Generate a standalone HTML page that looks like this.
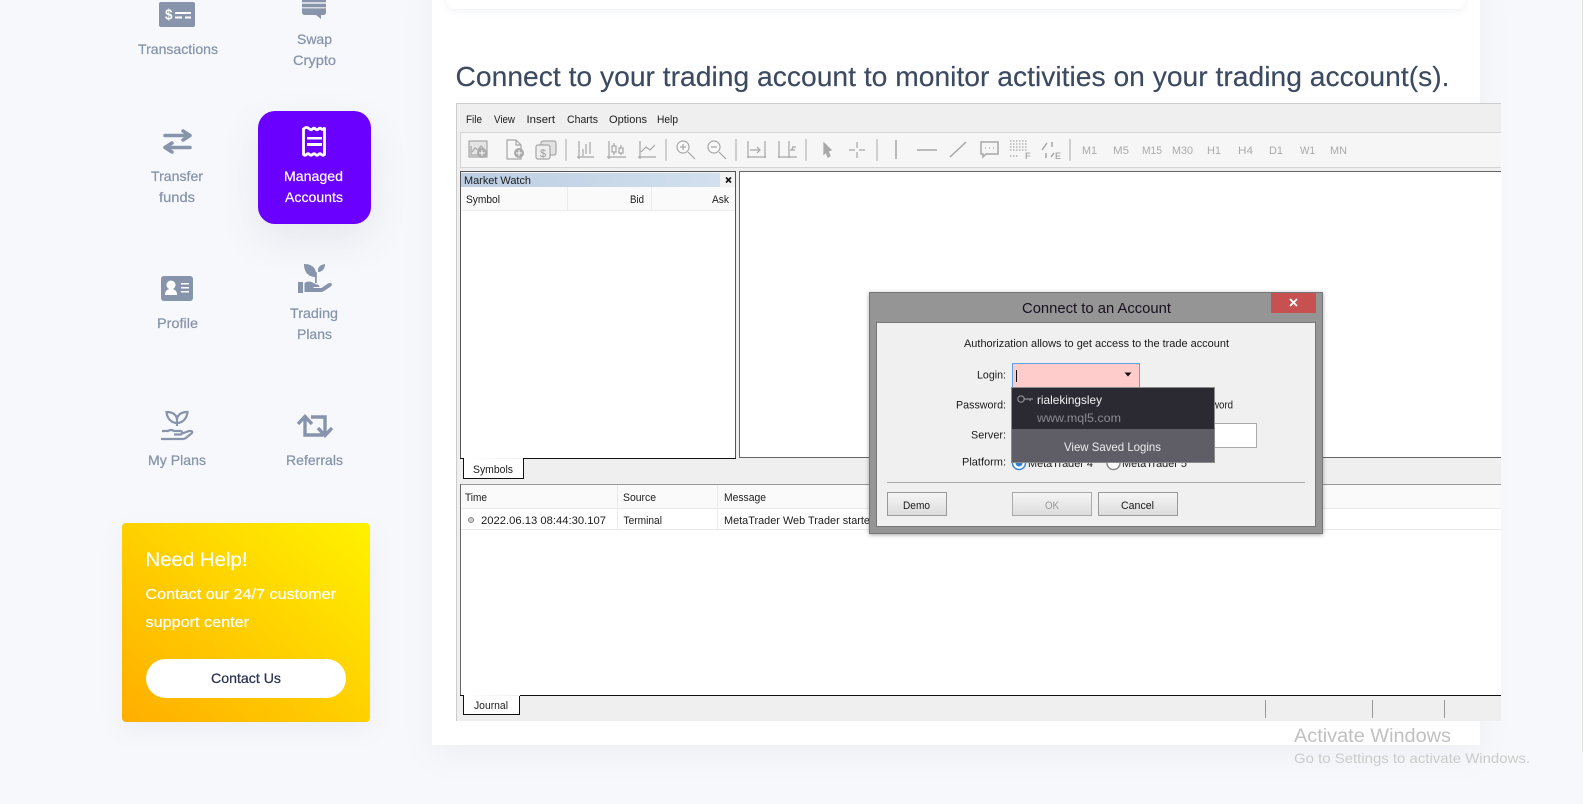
<!DOCTYPE html>
<html><head><meta charset="utf-8"><title>Managed Accounts</title>
<style>
html,body{margin:0;padding:0;width:1583px;height:804px;overflow:hidden;background:#f7f8fb;font-family:"Liberation Sans",sans-serif}
.a{position:absolute}
svg{position:absolute;left:0;top:0}
svg text{font-family:"Liberation Sans",sans-serif}
.n{fill:#8695ab;font-size:14px;stroke:#8695ab;stroke-width:.25px}
.w{fill:#fff;stroke:#fff;stroke-width:.2px}
.m{fill:#1c1c1c;font-size:11px}
.d{fill:#1a1a1a;font-size:11px}
.tf{fill:#aaa;font-size:11px}
.ic{fill:none;stroke:#a6a6a6;stroke-width:1.2}
.sep{stroke:#aaa;stroke-width:1}
</style></head><body>
<div class="a" style="left:432px;top:-20px;width:1048px;height:765px;background:#fff;box-shadow:0 10px 30px rgba(120,130,160,.07)"></div>
<div class="a" style="left:447px;top:-20px;width:1018px;height:29px;background:#fff;border-radius:8px;box-shadow:0 2px 8px rgba(120,130,160,.1)"></div>
<div class="a" style="left:258px;top:111px;width:113px;height:113px;background:#6a00ff;border-radius:17px;box-shadow:0 16px 40px rgba(90,90,130,.1)"></div>
<div class="a" style="left:122px;top:523px;width:248px;height:199px;background:linear-gradient(to top right,#ffae00,#fff200);border-radius:4px;box-shadow:0 8px 24px rgba(120,130,160,.08)"></div>
<div class="a" style="left:146px;top:659px;width:200px;height:39px;background:#fff;border-radius:20px"></div>

<svg width="1583" height="804" viewBox="0 0 1583 804" xmlns="http://www.w3.org/2000/svg">
<defs>
<linearGradient id="mw" x1="0" x2="1" y1="0" y2="0"><stop offset="0" stop-color="#bccee3"/><stop offset="1" stop-color="#d2e0ee"/></linearGradient>
<linearGradient id="btn" x1="0" x2="0" y1="0" y2="1"><stop offset="0" stop-color="#f6f6f6"/><stop offset="1" stop-color="#dcdcdc"/></linearGradient>
<filter id="ds" x="-5%" y="-5%" width="110%" height="110%"><feDropShadow dx="0" dy="1" stdDeviation="2" flood-color="#000" flood-opacity=".35"/></filter>
</defs>

<!-- Sidebar icons -->
<g fill="#8794ab">
<rect x="159" y="2" width="36" height="25" rx="2"/>
<path d="M302 0h24v12q0 3-3 3h-2v4l-5-4h-11q-3 0-3-3z"/>
<rect x="161" y="276" width="32" height="25" rx="3"/>
<path d="M304 264C312 264 317 268 316 277C308 277 304 272 304 264z"/>
<path d="M325 264C325 269 322 272 318 272C317.500 267 320 265 325 264z"/>
<rect x="315" y="272" width="1.800" height="11"/>
<path d="M298 282h5v11h-5zM304.500 283c3-2 6-2 9 0l3 1.500c2 0 3 1 3 2.500h-6v1h8l5-3.500c2-1.500 4-2 5-1s0 2.500-1.500 3.500l-6 4c-1 .7-2 1-3 1h-16.500z"/>
</g>
<rect x="302" y="2" width="24" height="2" fill="#d4d9e2"/>
<rect x="302" y="7" width="24" height="1.500" fill="#d4d9e2"/>
<text x="165" y="19.500" textLength="7.500" lengthAdjust="spacingAndGlyphs" style="font-size:15px;font-weight:bold" fill="#fff">$</text>
<g fill="#fff">
<rect x="175" y="12" width="16" height="2"/><rect x="175" y="16.500" width="7" height="2"/><rect x="185" y="16.500" width="6" height="2"/>
<circle cx="171" cy="285" r="4.500"/><path d="M165 295q0-6 6-6t6 6z"/>
<rect x="181" y="283" width="8" height="1.500"/><rect x="181" y="287" width="8" height="1.500"/><rect x="181" y="291" width="8" height="1.500"/>
<rect x="307" y="137" width="15" height="2.500"/><rect x="307" y="143" width="15" height="3"/>
</g>
<path d="M303.500 129q1.500-1.500 3-1.500t3 1.500 3 0 3 0 3 0 3 0 3-1.500v27q-1.500 1.500-3 0t-3 0-3 0-3 0-3 0-3 0-3 0z" fill="none" stroke="#fff" stroke-width="2.800"/>
<g fill="none" stroke="#8794ab" stroke-width="3.500" stroke-linecap="round" stroke-linejoin="round">
<path d="M165 135.500h25M183 131l7 4.500-7 4.500"/>
<path d="M190 147.500h-25M172 143l-7 4.500 7 4.500"/>
</g>
<g fill="none" stroke="#8794ab" stroke-width="2.200">
<path d="M177 423C171 423 167 418 166.500 412C172 412 176 414 177 419M177 423C183 423 187 418 187.500 412C182 412 178 414 177 419M177 419v7"/>
<path d="M162 431h6q3-2 6 0h7q2 1.500 0 3.500h-7M181 434l8-3q4-.5 3 2l-5 4q-2 2-4 2h-22"/>
</g>
<g fill="none" stroke="#8794ab" stroke-width="3.400">
<path d="M305 418v17h18M298 424l7-7.500 7 7.500"/>
<path d="M311 417h14v17M318 428l7 7.500 7-7.500"/>
</g>

<!-- Sidebar labels -->
<text class="n" x="138" y="54" textLength="80" lengthAdjust="spacingAndGlyphs">Transactions</text>
<text class="n" x="297" y="44" textLength="35" lengthAdjust="spacingAndGlyphs">Swap</text>
<text class="n" x="293" y="65" textLength="43" lengthAdjust="spacingAndGlyphs">Crypto</text>
<text class="n" x="151" y="181" textLength="52" lengthAdjust="spacingAndGlyphs">Transfer</text>
<text class="n" x="159" y="202" textLength="36" lengthAdjust="spacingAndGlyphs">funds</text>
<text class="n" x="157" y="328" textLength="41" lengthAdjust="spacingAndGlyphs">Profile</text>
<text class="n" x="290" y="318" textLength="48" lengthAdjust="spacingAndGlyphs">Trading</text>
<text class="n" x="297" y="339" textLength="35" lengthAdjust="spacingAndGlyphs">Plans</text>
<text class="n" x="148" y="465" textLength="58" lengthAdjust="spacingAndGlyphs">My Plans</text>
<text class="n" x="286" y="465" textLength="57" lengthAdjust="spacingAndGlyphs">Referrals</text>
<text class="w" x="284" y="181" textLength="59" lengthAdjust="spacingAndGlyphs" style="font-size:14px">Managed</text>
<text class="w" x="285" y="202" textLength="58" lengthAdjust="spacingAndGlyphs" style="font-size:14px">Accounts</text>

<!-- Help card -->
<text class="w" x="145.500" y="566" textLength="102" lengthAdjust="spacingAndGlyphs" style="font-size:19px">Need Help!</text>
<text class="w" x="145.500" y="599" textLength="190.500" lengthAdjust="spacingAndGlyphs" style="font-size:15px">Contact our 24/7 customer</text>
<text class="w" x="145.500" y="627" textLength="103.500" lengthAdjust="spacingAndGlyphs" style="font-size:15px">support center</text>
<text x="211" y="683" textLength="70" lengthAdjust="spacingAndGlyphs" style="font-size:14px;stroke:#2a3450;stroke-width:.25px" fill="#2a3450">Contact Us</text>

<!-- Heading -->
<text x="455.500" y="86" textLength="994" lengthAdjust="spacingAndGlyphs" style="font-size:28px;stroke:#3b4a61;stroke-width:.15px" fill="#3b4a61">Connect to your trading account to monitor activities on your trading account(s).</text>

<!-- MetaTrader window -->
<rect x="456" y="103" width="1045" height="618" fill="#efefef"/>
<rect x="456" y="103" width="1045" height="1" fill="#ccc"/>
<rect x="456" y="103" width="1" height="618" fill="#ccc"/>
<text class="m" x="466" y="123" textLength="16" lengthAdjust="spacingAndGlyphs">File</text>
<text class="m" x="494" y="123" textLength="21" lengthAdjust="spacingAndGlyphs">View</text>
<text class="m" x="526.500" y="123" textLength="28.500" lengthAdjust="spacingAndGlyphs">Insert</text>
<text class="m" x="567" y="123" textLength="31" lengthAdjust="spacingAndGlyphs">Charts</text>
<text class="m" x="609" y="123" textLength="38" lengthAdjust="spacingAndGlyphs">Options</text>
<text class="m" x="657" y="123" textLength="21" lengthAdjust="spacingAndGlyphs">Help</text>
<rect x="460" y="132" width="1041" height="35" fill="#f6f6f6"/>
<path d="M460 132.500h1041M460 167.500h1041M460.500 132v35" stroke="#d4d4d4" fill="none"/>

<!-- Toolbar -->
<g class="sep">
<path d="M566 139v22M666 139v22M736 139v22M806 139v22M877 139v22M1070 139v22"/>
</g>
<g class="ic">
<rect x="469" y="141" width="18" height="16" fill="#e4e4e4"/><path d="M471 146v9h14M472 152l3-4 3 2 3-4 3 3"/>
<path d="M507 140h9l5 5v14h-14zM516 140v5h5"/>
<rect x="541" y="141" width="15" height="14" rx="2" fill="#e2e2e2"/><rect x="536" y="145" width="14" height="14" rx="2" fill="#eee"/>
<path d="M577 157h17M579 141v18M583 149v7M586 144v10M590 142v12"/>
<path d="M607 157h19M609 141v18M614 143v12M621 145v10"/><rect x="612" y="146" width="4" height="6" fill="#f6f6f6"/><rect x="619" y="148" width="4" height="5" fill="#f6f6f6"/>
<path d="M638 157h18M640 141v18M641 152l5-5 4 3 5-5"/>
<circle cx="683" cy="147" r="6" fill="#fafafa"/><path d="M680 147h6M683 144v6M688 152l7 7"/>
<circle cx="714" cy="147" r="6" fill="#fafafa"/><path d="M711 147h6M719 152l7 7"/>
<path d="M748 141v17M747 157h19M765 141v17M750 150h10M757 147l3 3-3 3"/>
<path d="M779 141v17M778 157h19M789 141v17M792 147h4M795 150h-4l2-2"/>
<path d="M824 143l7 7-3 1 2 5-2 1-2-5-2 2z" fill="#aaa"/>
<path d="M857 142v6M857 152v6M849 150h6M859 150h6"/>
<path d="M896 140v19" stroke-width="1.500"/>
<path d="M917 150h20" stroke-width="1.500"/>
<path d="M950 157l16-15" stroke-width="1.500"/>
<path d="M981 142h17v12h-12l-3 3v-3h-2z" stroke-width="1.500"/><path d="M985 148h1M989 148h1M993 148h1"/>
<path d="M1010 141h18M1010 144h18M1010 147h18M1010 150h18M1010 156h8" stroke-dasharray="1.500 1.500"/>
<path d="M1042 150l5-7M1052 142v5M1046 153v5M1051 157l3-4" stroke-width="1.500"/>
</g>
<text x="1025" y="159" textLength="6" style="font-size:9px;font-weight:bold" fill="#aaa">F</text>
<text x="1055" y="159" textLength="6" style="font-size:9px;font-weight:bold" fill="#aaa">E</text>
<circle cx="482" cy="153" r="5" fill="#aaa"/><path d="M479 153h6M482 150v6" stroke="#fff"/>
<circle cx="519" cy="153" r="5" fill="#aaa"/><path d="M516 153h6M519 150v6" stroke="#fff"/>
<text x="540" y="157" textLength="7" style="font-size:11px" fill="#999">$</text>
<text class="tf" x="1082" y="154" textLength="15" lengthAdjust="spacingAndGlyphs">M1</text>
<text class="tf" x="1113" y="154" textLength="16" lengthAdjust="spacingAndGlyphs">M5</text>
<text class="tf" x="1142" y="154" textLength="20" lengthAdjust="spacingAndGlyphs">M15</text>
<text class="tf" x="1172" y="154" textLength="21" lengthAdjust="spacingAndGlyphs">M30</text>
<text class="tf" x="1207" y="154" textLength="14" lengthAdjust="spacingAndGlyphs">H1</text>
<text class="tf" x="1238" y="154" textLength="15" lengthAdjust="spacingAndGlyphs">H4</text>
<text class="tf" x="1269" y="154" textLength="14" lengthAdjust="spacingAndGlyphs">D1</text>
<text class="tf" x="1300" y="154" textLength="15" lengthAdjust="spacingAndGlyphs">W1</text>
<text class="tf" x="1330" y="154" textLength="17" lengthAdjust="spacingAndGlyphs">MN</text>

<!-- Market Watch panel -->
<rect x="460" y="171" width="276" height="287" fill="#fff"/>
<rect x="460" y="171" width="276" height="16" fill="#f2f2f2"/>
<rect x="461" y="173" width="259" height="14" fill="url(#mw)"/>
<rect x="460" y="187" width="276" height="23" fill="#fafafa"/>
<path d="M460 210.500h276M567.500 187v23M651.500 187v23" stroke="#ececec"/>
<path d="M460.500 458v-286.500h275v286.500" fill="none" stroke="#555"/>
<path d="M460 458.500h3M523 458.500h213" stroke="#111" fill="none"/>
<text x="464" y="184" textLength="67" lengthAdjust="spacingAndGlyphs" class="m">Market Watch</text>
<path d="M726 177.500l5 5M731 177.500l-5 5" stroke="#111" stroke-width="1.600"/>
<text x="466" y="203" textLength="34" lengthAdjust="spacingAndGlyphs" class="m">Symbol</text>
<text x="630" y="203" textLength="14" lengthAdjust="spacingAndGlyphs" class="m">Bid</text>
<text x="712" y="203" textLength="17" lengthAdjust="spacingAndGlyphs" class="m">Ask</text>

<!-- Chart panel -->
<rect x="739.500" y="171.500" width="762" height="286" fill="#fff" stroke="#666"/>
<rect x="1501" y="165" width="2" height="300" fill="#f7f8fb"/>

<!-- Symbols tab -->
<path d="M463.500 458v20.500h60V459" fill="#fff" stroke="#111"/>
<text x="473" y="473" textLength="40" lengthAdjust="spacingAndGlyphs" class="m">Symbols</text>

<!-- Journal panel -->
<rect x="460" y="484" width="1041" height="211" fill="#fff"/>
<rect x="460" y="485" width="1041" height="23" fill="#fafafa"/>
<path d="M460 484.500h1041" stroke="#999"/>
<path d="M460 508.500h1041M460 529.500h1041M617.500 485v44M717.500 485v44" stroke="#eaeaea"/>
<path d="M460.500 484v211" stroke="#666"/>
<path d="M460 695.500h3M520 695.500h981" stroke="#111"/>
<text x="465" y="501" textLength="22" lengthAdjust="spacingAndGlyphs" class="m">Time</text>
<text x="623" y="501" textLength="33" lengthAdjust="spacingAndGlyphs" class="m">Source</text>
<text x="724" y="501" textLength="42" lengthAdjust="spacingAndGlyphs" class="m">Message</text>
<circle cx="471" cy="520" r="2.500" fill="#ccc" stroke="#888"/>
<text x="481" y="524" textLength="125" lengthAdjust="spacingAndGlyphs" class="m">2022.06.13 08:44:30.107</text>
<text x="623.500" y="524" textLength="38.500" lengthAdjust="spacingAndGlyphs" class="m">Terminal</text>
<text x="724" y="524" textLength="146" lengthAdjust="spacingAndGlyphs" class="m">MetaTrader Web Trader starte</text>
<path d="M463.500 695v19.500h56V696" fill="#fff" stroke="#111"/>
<text x="474" y="709" textLength="34" lengthAdjust="spacingAndGlyphs" class="m">Journal</text>
<path d="M1265.500 700v18M1372.500 700v18M1444.500 700v18" stroke="#999"/>

<!-- Dialog -->
<rect x="869.500" y="292.500" width="453" height="241" fill="#959595" stroke="#777" filter="url(#ds)"/>
<rect x="1271" y="293" width="45" height="20" fill="#c75050"/>
<path d="M1290 299l7 7M1297 299l-7 7" stroke="#fff" stroke-width="1.800"/>
<text x="1022" y="313" textLength="149" lengthAdjust="spacingAndGlyphs" style="font-size:15px" fill="#1a1020">Connect to an Account</text>
<rect x="876.500" y="322.500" width="439" height="204" fill="#f0f0f0" stroke="#777"/>
<text class="d" x="964" y="347" textLength="265" lengthAdjust="spacingAndGlyphs">Authorization allows to get access to the trade account</text>
<text class="d" x="977" y="378.500" textLength="29" lengthAdjust="spacingAndGlyphs">Login:</text>
<text class="d" x="956" y="408.500" textLength="50" lengthAdjust="spacingAndGlyphs">Password:</text>
<text class="d" x="971" y="438.500" textLength="35" lengthAdjust="spacingAndGlyphs">Server:</text>
<text class="d" x="962" y="465.500" textLength="44" lengthAdjust="spacingAndGlyphs">Platform:</text>
<rect x="1012.500" y="363.500" width="127" height="24" fill="#ffcccc" stroke="#5ba3e8"/>
<rect x="1016" y="370" width="1" height="12" fill="#111"/>
<path d="M1124.500 372.500h7l-3.500 4z" fill="#111"/>
<text class="d" x="1212" y="408.500" textLength="21" lengthAdjust="spacingAndGlyphs">word</text>
<rect x="1100.500" y="423.500" width="156" height="24" fill="#fff" stroke="#aaa"/>
<circle cx="1019" cy="463" r="6.500" fill="#fff" stroke="#3b87d8" stroke-width="1.500"/><circle cx="1019" cy="463" r="3.500" fill="#2f7fd6"/>
<circle cx="1113.500" cy="463" r="6.500" fill="#fff" stroke="#888" stroke-width="1.500"/>
<text class="d" x="1028" y="467" textLength="65" lengthAdjust="spacingAndGlyphs">MetaTrader 4</text>
<text class="d" x="1122" y="467" textLength="65" lengthAdjust="spacingAndGlyphs">MetaTrader 5</text>
<path d="M887 482.500h418" stroke="#aaa"/>
<rect x="887.500" y="492.500" width="59" height="23" fill="url(#btn)" stroke="#999"/>
<rect x="1012.500" y="492.500" width="79" height="23" fill="url(#btn)" stroke="#aaa"/>
<rect x="1098.500" y="492.500" width="79" height="23" fill="url(#btn)" stroke="#999"/>
<text class="d" x="903" y="509" textLength="27" lengthAdjust="spacingAndGlyphs">Demo</text>
<text x="1045" y="509" textLength="14" lengthAdjust="spacingAndGlyphs" style="font-size:11px" fill="#999">OK</text>
<text class="d" x="1121" y="509" textLength="33" lengthAdjust="spacingAndGlyphs">Cancel</text>

<!-- Dropdown -->
<rect x="1011" y="387" width="204" height="76" fill="#8b8b8b"/>
<rect x="1012" y="388" width="202" height="41" fill="#2b2a33"/>
<rect x="1012" y="429" width="202" height="33" fill="#5f5e66"/>
<circle cx="1021" cy="399" r="3.200" fill="none" stroke="#8f8f96" stroke-width="1.200"/>
<path d="M1024 399h9M1030 399v2" stroke="#8f8f96" stroke-width="1.200" fill="none"/>
<text x="1037" y="404" textLength="65" lengthAdjust="spacingAndGlyphs" style="font-size:12px" fill="#f2f2f4">rialekingsley</text>
<text x="1037" y="422" textLength="84" lengthAdjust="spacingAndGlyphs" style="font-size:12px" fill="#8a8994">www.mql5.com</text>
<text x="1064" y="451" textLength="97" lengthAdjust="spacingAndGlyphs" style="font-size:12px" fill="#ecebef">View Saved Logins</text>

<!-- Windows watermark -->
<text x="1294" y="742" textLength="157" lengthAdjust="spacingAndGlyphs" style="font-size:19px" fill="#c0c0c0">Activate Windows</text>
<text x="1294" y="763" textLength="236" lengthAdjust="spacingAndGlyphs" style="font-size:14px" fill="#cbcbcb">Go to Settings to activate Windows.</text>
<rect x="1582" y="0" width="1" height="752" fill="#e2e2e2"/>
</svg>
</body></html>
